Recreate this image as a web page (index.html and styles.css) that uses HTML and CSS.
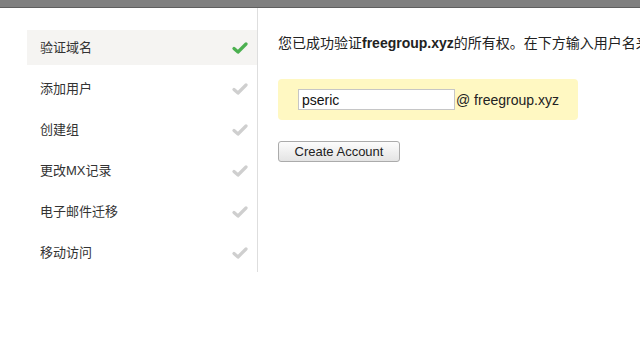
FILE: index.html
```html
<!DOCTYPE html>
<html lang="zh">
<head>
<meta charset="utf-8">
<link rel="stylesheet" href="styles.css">
</head>
<body>
<div class="topbar"></div>
<div class="layout">
  <ul class="steps">
    <li class="step active"><span>验证域名</span><svg class="check" viewBox="0 0 16 14" width="16" height="14"><polyline points="2,7.5 6,11 14,3" /></svg></li>
    <li class="step"><span>添加用户</span><svg class="check" viewBox="0 0 16 14" width="16" height="14"><polyline points="2,7.5 6,11 14,3" /></svg></li>
    <li class="step"><span>创建组</span><svg class="check" viewBox="0 0 16 14" width="16" height="14"><polyline points="2,7.5 6,11 14,3" /></svg></li>
    <li class="step"><span>更改MX记录</span><svg class="check" viewBox="0 0 16 14" width="16" height="14"><polyline points="2,7.5 6,11 14,3" /></svg></li>
    <li class="step"><span>电子邮件迁移</span><svg class="check" viewBox="0 0 16 14" width="16" height="14"><polyline points="2,7.5 6,11 14,3" /></svg></li>
    <li class="step"><span>移动访问</span><svg class="check" viewBox="0 0 16 14" width="16" height="14"><polyline points="2,7.5 6,11 14,3" /></svg></li>
  </ul>
  <div class="main">
    <p class="intro">您已成功验证<b>freegroup.xyz</b>的所有权。在下方输入用户名来创建您的第一个用户帐户。</p>
    <div class="userbox">
      <input class="username" type="text" value="pseric"><span class="domain">@ freegroup.xyz</span>
    </div>
    <button class="create">Create Account</button>
  </div>
</div>
</body>
</html>
```

FILE: styles.css
```css
html, body {
  margin: 0;
  padding: 0;
  background: #fff;
  font-family: "Liberation Sans", "Noto Sans CJK SC", sans-serif;
  color: #222;
  overflow: hidden;
}
.topbar {
  height: 7px;
  background: #808080;
  border-bottom: 1px solid #5f5f5f;
}
.layout {
  display: flex;
  align-items: flex-start;
}
.steps {
  list-style: none;
  margin: 0 0 0 27px;
  padding: 22px 0 2px 0;
  width: 230px;
  border-right: 1px solid #dedede;
}
.step {
  display: flex;
  align-items: center;
  justify-content: space-between;
  height: 35px;
  margin-bottom: 6px;
  padding: 0 9px 2px 13px;
  box-sizing: border-box;
  font-size: 13px;
  color: #333;
}
.step:last-child {
  margin-bottom: 0;
}
.step.active {
  background: #f5f4f2;
}
.check {
  margin-top: 2px;
}
.check polyline {
  fill: none;
  stroke: #cfcfcf;
  stroke-width: 3.2;
  stroke-linecap: round;
  stroke-linejoin: round;
}
.step.active .check polyline {
  stroke: #4cb050;
}
.main {
  flex: 1;
  min-width: 0;
  padding: 25px 0 0 20px;
  overflow: hidden;
}
.intro {
  margin: 0;
  font-size: 14px;
  line-height: 20px;
  white-space: nowrap;
  color: #222;
}
.intro b {
  font-weight: bold;
}
.userbox {
  margin-top: 26px;
  width: 260px;
  height: 21px;
  padding: 10px 20px;
  background: #fff8c2;
  border-radius: 4px;
  display: flex;
  align-items: center;
}
.username {
  box-sizing: border-box;
  width: 157px;
  height: 21px;
  margin: 0;
  padding: 0 3px;
  border: 1px solid #c6c6c6;
  font-family: "Liberation Sans", sans-serif;
  font-size: 14px;
  color: #111;
  background: #fff;
}
.domain {
  margin-left: 1px;
  font-size: 14px;
  color: #222;
  white-space: nowrap;
}
.create {
  display: block;
  margin-top: 21px;
  width: 122px;
  height: 21px;
  padding: 0;
  border: 1px solid #ababab;
  border-radius: 3px;
  background: linear-gradient(#fcfcfc, #e4e4e4);
  font-family: "Liberation Sans", sans-serif;
  font-size: 13px;
  color: #222;
}
```
